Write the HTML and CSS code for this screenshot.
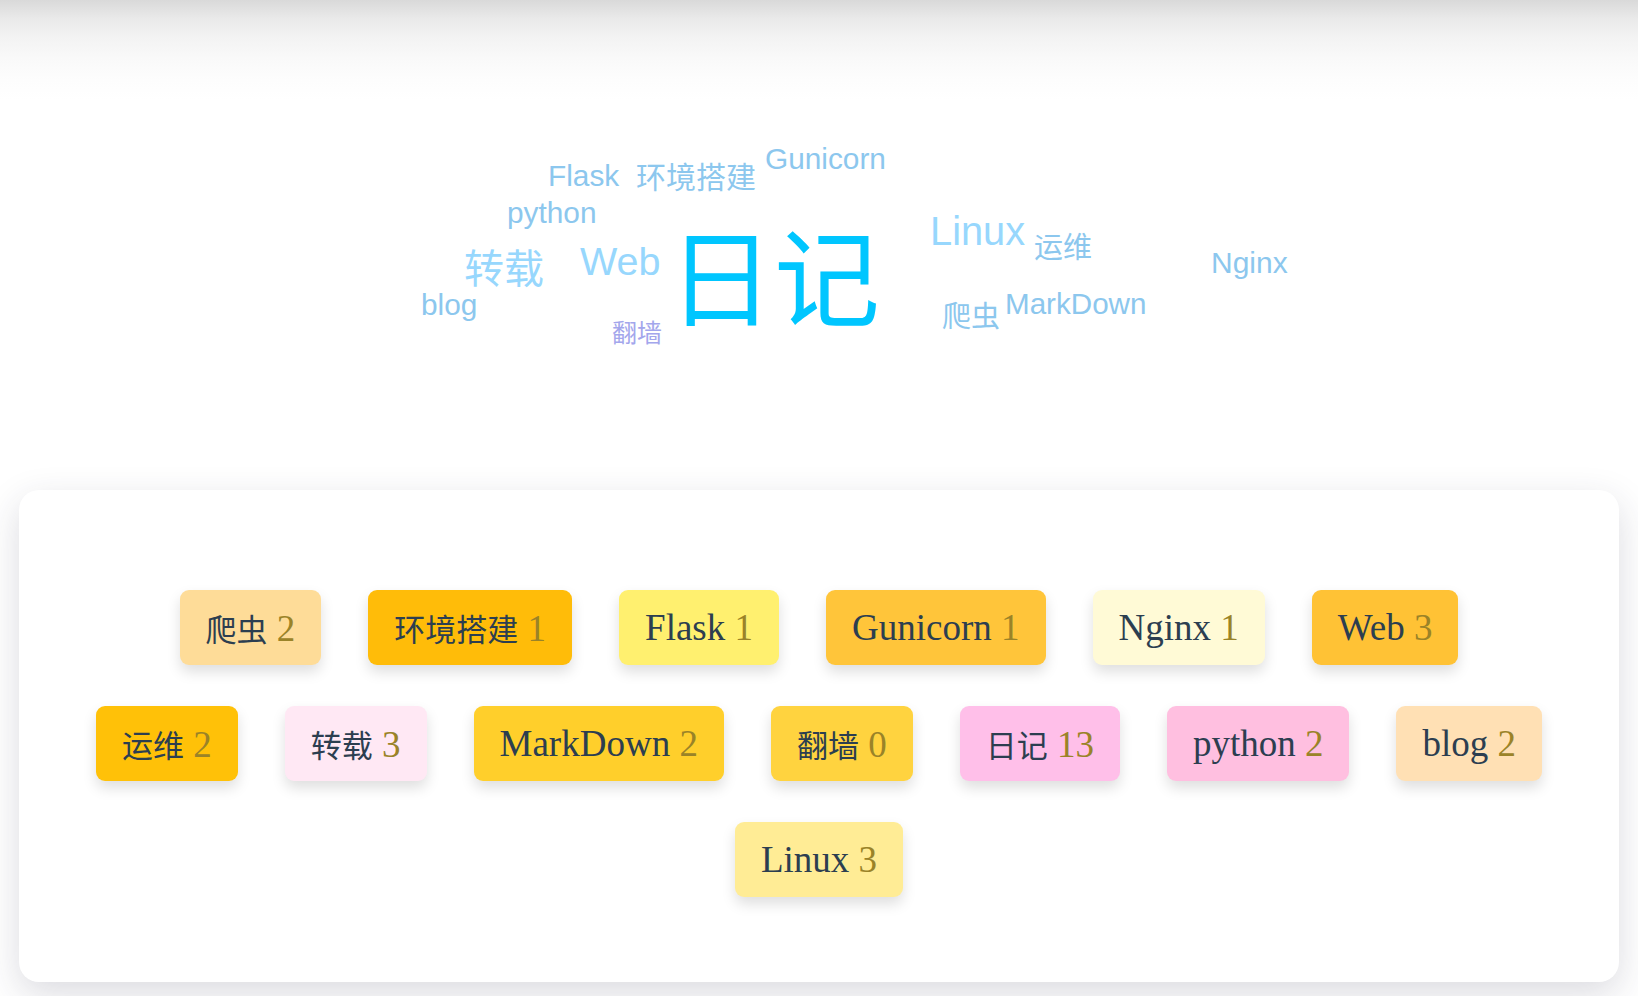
FILE: index.html
```html
<!DOCTYPE html>
<html lang="zh-CN">
<head>
<meta charset="utf-8">
<title>标签</title>
<link rel="stylesheet" href="styles.css">
</head>
<body>
<div class="page">
  <section class="cloud">
    <span class="word w-sm" style="left:548px;top:161px;font-size:29.8px">Flask</span>
    <span class="word w-sm zh" style="left:636px;top:160px;font-size:30px">环境搭建</span>
    <span class="word w-sm" style="left:765px;top:144px;font-size:29.8px">Gunicorn</span>
    <span class="word w-sm" style="left:507px;top:198px;font-size:29.8px">python</span>
    <span class="word w-md zh" style="left:464px;top:246px;font-size:40px">转载</span>
    <span class="word w-md" style="left:580px;top:242px;font-size:39.5px">Web</span>
    <span class="word w-sm" style="left:421px;top:290px;font-size:29.8px">blog</span>
    <span class="word w-xs zh" style="left:612px;top:319px;font-size:25px">翻墙</span>
    <span class="word w-lg zh" style="left:668px;top:219px;font-size:106px">日记</span>
    <span class="word w-md" style="left:930px;top:212px;font-size:39.8px">Linux</span>
    <span class="word w-sm zh" style="left:1034px;top:231px;font-size:29px">运维</span>
    <span class="word w-sm" style="left:1211px;top:248px;font-size:30px">Nginx</span>
    <span class="word w-sm zh" style="left:942px;top:300px;font-size:29px">爬虫</span>
    <span class="word w-sm" style="left:1005px;top:289px;font-size:29.6px">MarkDown</span>
  </section>

  <section class="card">
    <div class="tags">
      <a class="tag c-peach"><span class="zh">爬虫</span> <span class="count">2</span></a>
      <a class="tag c-amber"><span class="zh">环境搭建</span> <span class="count">1</span></a>
      <a class="tag c-lemon">Flask <span class="count">1</span></a>
      <a class="tag c-gold">Gunicorn <span class="count">1</span></a>
      <a class="tag c-cream">Nginx <span class="count">1</span></a>
      <a class="tag c-gold2">Web <span class="count">3</span></a>
      <a class="tag c-amber2"><span class="zh">运维</span> <span class="count">2</span></a>
      <a class="tag c-blush"><span class="zh">转载</span> <span class="count">3</span></a>
      <a class="tag c-sun">MarkDown <span class="count">2</span></a>
      <a class="tag c-sun2"><span class="zh">翻墙</span> <span class="count">0</span></a>
      <a class="tag c-pink"><span class="zh">日记</span> <span class="count">13</span></a>
      <a class="tag c-pink2">python <span class="count">2</span></a>
      <a class="tag c-sand">blog <span class="count">2</span></a>
      <a class="tag c-butter">Linux <span class="count">3</span></a>
    </div>
  </section>
</div>
</body>
</html>
```

FILE: styles.css
```css
html, body {
  margin: 0;
  padding: 0;
}

body {
  background: #ffffff linear-gradient(to bottom, #d9d9d9 0, #e9e9e9 18px, #f3f3f3 38px, #f9f9f9 58px, #fdfdfd 80px, #ffffff 100px) no-repeat;
  background-size: 100% 100px;
  font-family: "Liberation Serif", "Noto Sans CJK SC", serif;
  color: #2c3e50;
  height: 996px;
  overflow: hidden;
}

.page {
  width: 100%;
}

/* word cloud */
.cloud {
  position: relative;
  height: 490px;
}

.word {
  position: absolute;
  white-space: nowrap;
  line-height: 1;
  font-family: "Liberation Sans", Arial, sans-serif;
}

.word.zh {
  font-family: "Noto Sans CJK SC", sans-serif;
}

.w-sm { color: #8cc7ee; }
.w-md { color: #97d7fd; }
.w-lg { color: #00c6ff; }
.w-xs { color: #a3a6ec; }

/* tag card */
.card {
  width: 1600px;
  margin: 0 auto;
  box-sizing: border-box;
  padding: 100px 70px 85px;
  background: #ffffff;
  border-radius: 20px;
  box-shadow: 0 12px 36px rgba(40, 40, 70, 0.17);
}

.tags {
  display: flex;
  flex-wrap: wrap;
  justify-content: center;
  column-gap: 47px;
  row-gap: 41px;
}

.tag {
  display: block;
  height: 75px;
  line-height: 75px;
  padding: 0 26px;
  border-radius: 9px;
  font-size: 37px;
  color: #2c3e50;
  white-space: nowrap;
  box-shadow: 0 7px 14px rgba(0, 0, 0, 0.13);
}

.tag .zh {
  font-family: "Noto Sans CJK SC", sans-serif;
  font-size: 31px;
}

.count {
  color: #9a8328;
}

.c-peach  { background: #fedc98; }
.c-amber  { background: #ffbc09; }
.c-lemon  { background: #fff06f; }
.c-gold   { background: #ffc53a; }
.c-cream  { background: #fffad6; }
.c-gold2  { background: #ffc235; }
.c-amber2 { background: #ffc108; }
.c-blush  { background: #ffe8f4; }
.c-sun    { background: #ffcf2b; }
.c-sun2   { background: #ffd33f; }
.c-pink   { background: #ffbfe9; }
.c-pink2  { background: #ffbfe0; }
.c-sand   { background: #ffe0b4; }
.c-butter { background: #ffec95; }
```
